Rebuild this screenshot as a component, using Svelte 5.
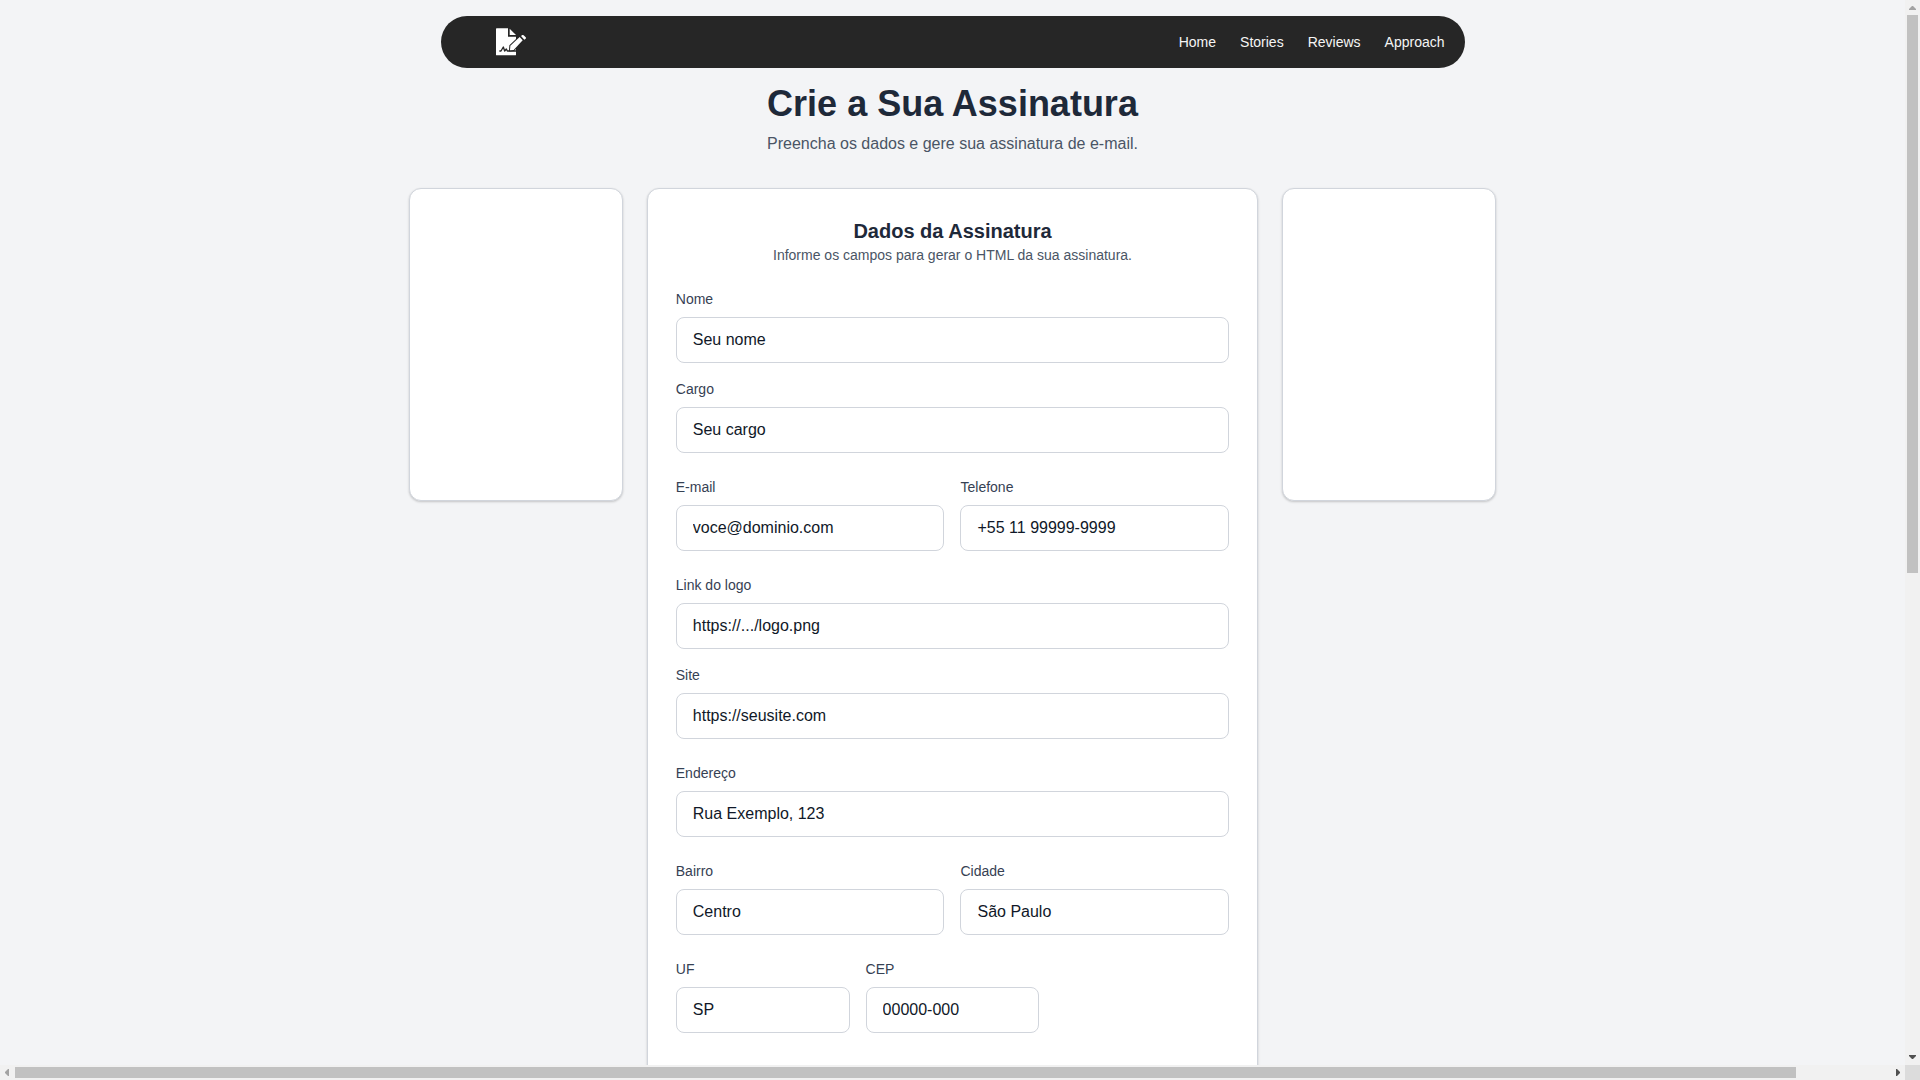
<script lang="ts">
  import { onMount } from "svelte";

  type Field = { id: string; label: string; placeholder: string; type?: string };
  type Row = { cols: number; fields: Field[] };

  const links = ["Home", "Stories", "Reviews", "Approach"];

  const groups: Row[] = [
    {
      cols: 1,
      fields: [
        { id: "nome", label: "Nome", placeholder: "Seu nome" },
        { id: "cargo", label: "Cargo", placeholder: "Seu cargo" },
      ],
    },
    {
      cols: 2,
      fields: [
        { id: "email", label: "E-mail", placeholder: "voce@dominio.com", type: "email" },
        { id: "telefone", label: "Telefone", placeholder: "+55 11 99999-9999", type: "tel" },
      ],
    },
    {
      cols: 1,
      fields: [
        { id: "logo", label: "Link do logo", placeholder: "https://.../logo.png", type: "url" },
        { id: "site", label: "Site", placeholder: "https://seusite.com", type: "url" },
      ],
    },
    {
      cols: 1,
      fields: [{ id: "endereco", label: "Endereço", placeholder: "Rua Exemplo, 123" }],
    },
    {
      cols: 2,
      fields: [
        { id: "bairro", label: "Bairro", placeholder: "Centro" },
        { id: "cidade", label: "Cidade", placeholder: "São Paulo" },
      ],
    },
    {
      cols: 3,
      fields: [
        { id: "uf", label: "UF", placeholder: "SP" },
        { id: "cep", label: "CEP", placeholder: "00000-000" },
      ],
    },
  ];

  let values: Record<string, string> = $state({});

  let scroller: HTMLDivElement;
  let bars = $state({ top: 0, height: 100, left: 0, width: 100 });

  // Thumb position and length, as percentages of the track
  function syncBars() {
    const { scrollTop, scrollLeft, scrollWidth, scrollHeight, clientWidth, clientHeight } = scroller;
    bars = {
      top: (scrollTop / scrollHeight) * 100,
      height: (clientHeight / scrollHeight) * 100,
      left: (scrollLeft / scrollWidth) * 100,
      width: (clientWidth / scrollWidth) * 100,
    };
  }

  function nudge(left: number, top: number) {
    scroller.scrollBy({ left, top });
  }

  onMount(syncBars);
</script>

<svelte:window onresize={syncBars} />

<div class="shell">
  <div class="scroller" bind:this={scroller} onscroll={syncBars}>
    <nav class="navbar">
      <a class="brand" href="#home" aria-label="Assinatura">
        <svg width="30" height="28" viewBox="0 0 90 84" aria-hidden="true">
          <path fill="#fff" d="M2 1H36V26H60V80Q60 82 58 82H2Q0 82 0 80V3Q0 1 2 1Z" />
          <path fill="#fff" d="M41 2L60 21H41Z" />
          <path
            fill="none"
            stroke="#262626"
            stroke-width="4"
            stroke-linejoin="round"
            d="M10 69H15L22 57L26 69L31 63L34 69H61"
          />
          <path
            fill="#fff"
            stroke="#262626"
            stroke-width="6"
            paint-order="stroke"
            d="M43 53L71 27L80 37L53 66L42 67Z"
          />
          <path fill="#fff" d="M75 24L79 21Q81 20 83 22L89 28Q91 30 89 32L85 35Z" />
        </svg>
      </a>
      <ul class="links">
        {#each links as link}
          <li><a href={`#${link.toLowerCase()}`}>{link}</a></li>
        {/each}
      </ul>
    </nav>

    <header class="intro">
      <h1>Crie a Sua Assinatura</h1>
      <p>Preencha os dados e gere sua assinatura de e-mail.</p>
    </header>

    <main class="layout">
      <aside class="card side"></aside>

      <section class="card form-card">
        <div class="form-head">
          <h2>Dados da Assinatura</h2>
          <p>Informe os campos para gerar o HTML da sua assinatura.</p>
        </div>

        <form class="form">
          {#each groups as group}
            <div class="row" class:two={group.cols === 2} class:three={group.cols === 3}>
              {#each group.fields as field (field.id)}
                <div class="field">
                  <label for={field.id}>{field.label}</label>
                  <input
                    id={field.id}
                    type={field.type ?? "text"}
                    placeholder={field.placeholder}
                    bind:value={values[field.id]}
                  />
                </div>
              {/each}
            </div>
          {/each}
        </form>
      </section>

      <aside class="card side"></aside>
    </main>

    <section class="preview"></section>
  </div>

  <div class="bar vertical">
    <button type="button" class:off={bars.top === 0} aria-label="Rolar para cima" onclick={() => nudge(0, -40)}>
      <svg width="15" height="15" aria-hidden="true"><path d="M4 10H11V9L8 6H7L4 9Z" /></svg>
    </button>
    <div class="track">
      <div class="thumb" style:top="{bars.top}%" style:height="{bars.height}%"></div>
    </div>
    <button type="button" aria-label="Rolar para baixo" onclick={() => nudge(0, 40)}>
      <svg width="15" height="15" aria-hidden="true"><path d="M4 5H11V6L8 9H7L4 6Z" /></svg>
    </button>
  </div>

  <div class="bar horizontal">
    <button type="button" class:off={bars.left === 0} aria-label="Rolar para a esquerda" onclick={() => nudge(-40, 0)}>
      <svg width="15" height="15" aria-hidden="true"><path d="M9 4V11H8L5 8V7L8 4Z" /></svg>
    </button>
    <div class="track">
      <div class="thumb" style:left="{bars.left}%" style:width="{bars.width}%"></div>
    </div>
    <button type="button" aria-label="Rolar para a direita" onclick={() => nudge(40, 0)}>
      <svg width="15" height="15" aria-hidden="true"><path d="M6 4V11H7L10 8V7L7 4Z" /></svg>
    </button>
  </div>

  <div class="corner"></div>
</div>

<style>
  :global(body) {
    margin: 0;
    background: #f3f4f6;
  }

  .shell {
    display: grid;
    grid-template-columns: minmax(0, 1fr) 15px;
    grid-template-rows: minmax(0, 1fr) 15px;
    height: 100vh;
  }

  .scroller {
    box-sizing: border-box;
    padding-top: 16px;
    overflow: scroll;
    scrollbar-width: none;
    background: #f3f4f6;
    font-family: "Liberation Sans", Arial, sans-serif;
    color: #1e2939;
  }

  h1,
  h2,
  p,
  ul {
    margin: 0;
    padding: 0;
  }

  /* Navbar */
  .navbar {
    box-sizing: border-box;
    display: flex;
    align-items: center;
    justify-content: space-between;
    max-width: 1024px;
    margin: 0 auto;
    padding: 12px 20px 12px 55px;
    border-radius: 999px;
    background: #262626;
  }

  .brand,
  .brand svg {
    display: block;
  }

  .links {
    display: flex;
    gap: 24px;
    list-style: none;
    font-size: 14px;
    line-height: 20px;
  }

  .links a {
    color: #f5f5f5;
    text-decoration: none;
  }

  .links a:hover {
    color: #d4d4d4;
  }

  /* Heading */
  .intro {
    padding: 16px 0 32px;
    text-align: center;
  }

  .intro h1 {
    font-size: 36px;
    line-height: 40px;
    font-weight: 700;
  }

  .intro p {
    margin-top: 8px;
    font-size: 16px;
    line-height: 24px;
    color: #4a5565;
  }

  /* Columns */
  .layout {
    box-sizing: border-box;
    display: grid;
    grid-template-columns: repeat(14, minmax(0, 1fr));
    align-items: start;
    gap: 24px;
    max-width: 1152px;
    margin: 0 auto;
    padding: 0 32px;
  }

  .card {
    box-sizing: border-box;
    border: 1px solid #d1d5dc;
    border-radius: 12px;
    background: #fff;
    box-shadow:
      0 1px 3px rgba(0, 0, 0, 0.1),
      0 1px 2px rgba(0, 0, 0, 0.1);
  }

  .side {
    grid-column: span 3;
    min-height: 313px;
  }

  .form-card {
    grid-column: span 8;
    padding: 28px 28px 96px;
  }

  .form-head {
    margin-bottom: 24px;
    text-align: center;
  }

  .form-head h2 {
    font-size: 20px;
    line-height: 28px;
    font-weight: 700;
  }

  .form-head p {
    font-size: 14px;
    line-height: 20px;
    color: #4a5565;
  }

  .form {
    display: grid;
    gap: 24px;
  }

  .row {
    display: grid;
    gap: 16px;
  }

  .row.two {
    grid-template-columns: repeat(2, minmax(0, 1fr));
  }

  .row.three {
    grid-template-columns: repeat(3, minmax(0, 1fr));
  }

  .field label {
    display: block;
    margin-bottom: 8px;
    font-size: 14px;
    line-height: 20px;
    color: #364153;
  }

  .field input {
    box-sizing: border-box;
    display: block;
    width: 100%;
    height: 46px;
    padding: 10px 16px;
    border: 1px solid #d1d5dc;
    border-radius: 8px;
    background: #fff;
    font: inherit;
    font-size: 16px;
    line-height: 24px;
    color: #101828;
  }

  .field input::placeholder {
    color: #101828;
    opacity: 1;
  }

  .field input:focus {
    outline: 2px solid #99a1af;
    outline-offset: 0;
  }

  .preview {
    width: calc(100% + 100px);
    height: 845px;
  }

  /* Scrollbars */
  .bar {
    display: flex;
    background: #f1f1f1;
  }

  .vertical {
    flex-direction: column;
  }

  .bar button {
    flex: none;
    width: 15px;
    height: 15px;
    padding: 0;
    border: 0;
    background: none;
  }

  .bar svg {
    display: block;
    fill: #505050;
  }

  .bar .off svg {
    fill: #a3a3a3;
  }

  .track {
    position: relative;
    flex: 1;
  }

  .thumb {
    position: absolute;
    background: #c1c1c1;
  }

  .vertical .thumb {
    left: 2px;
    right: 2px;
  }

  .horizontal .thumb {
    top: 2px;
    bottom: 2px;
  }

  .corner {
    background: #dcdcdc;
  }
</style>
